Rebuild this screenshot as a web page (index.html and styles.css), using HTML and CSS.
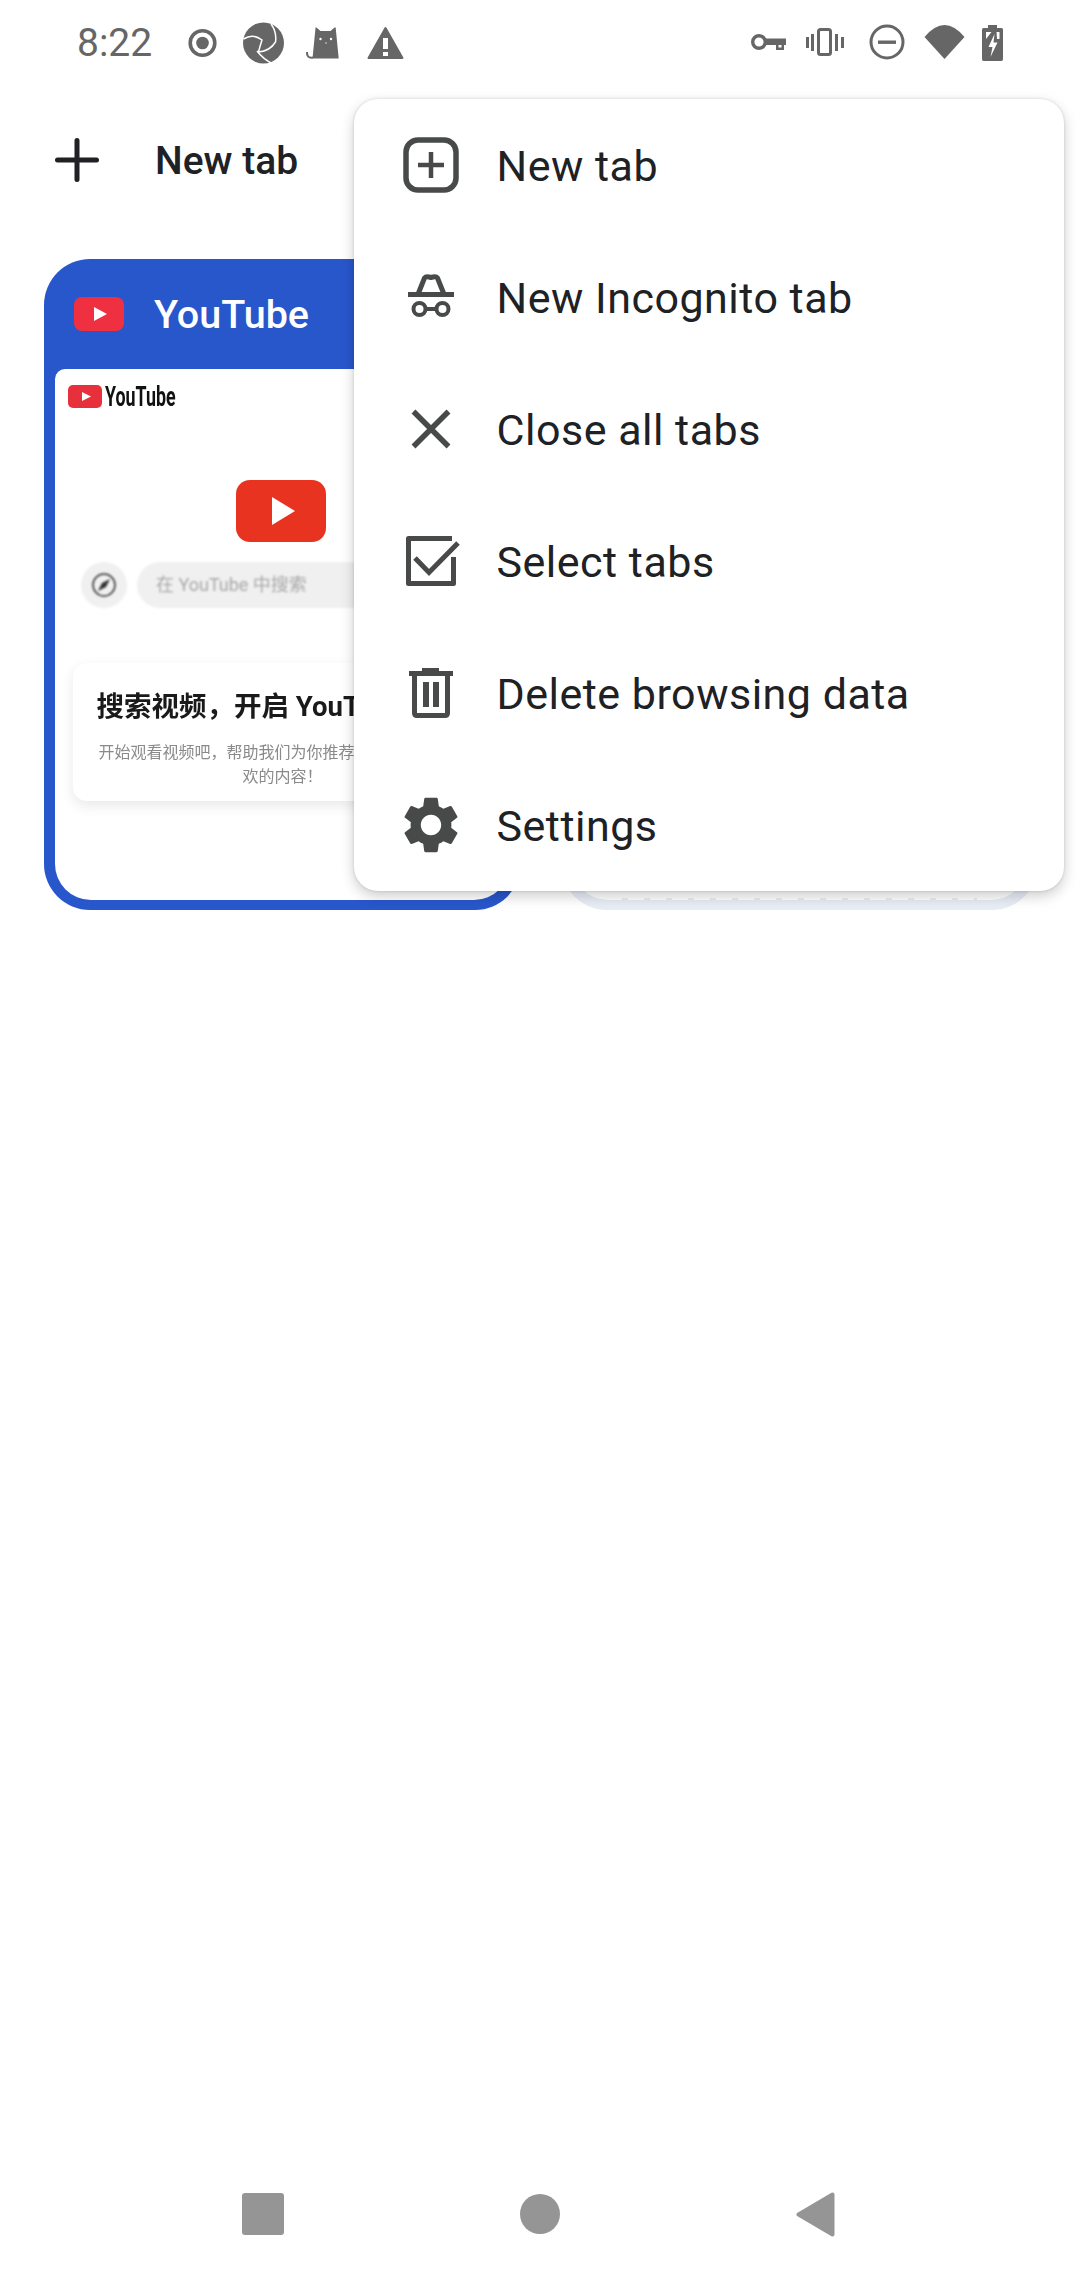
FILE: index.html
```html
<!DOCTYPE html>
<html>
  <head>
    <title>tabs</title>
    <link rel="stylesheet" href="styles.css">
  </head>
  <body>
    <div class="page">
      <div class="status-bar">
        <div class="status-left">
          <span class="time">8:22</span>
          <svg class="slot" viewBox="0 0 61 44"><circle cx="30.5" cy="22" r="12.3" fill="none" stroke="#666" stroke-width="3.6"/><circle cx="30.5" cy="22" r="6.3" fill="#666"/></svg>
          <svg class="slot" viewBox="0 0 61 44"><circle cx="30.5" cy="22" r="20.5" fill="#666"/><path d="M10.5 18Q20 12 29 19Q27 25 25.5 31Q37 30 42.5 21Q44 11 38 3M24 30Q30 38 40 43" fill="none" stroke="#fff" stroke-width="1.5"/></svg>
          <svg class="slot" viewBox="0 0 61 44"><path d="M18.5 37.500L21.500 7Q21.700 5.500 23 7L26.500 10H36.500L40 7Q41.500 5.500 41.700 7L44.700 37.500Z" fill="#666"/><path d="M19 36.500Q12.500 37.500 13 31" fill="none" stroke="#666" stroke-width="2"/><circle cx="26.500" cy="18" r="1.200" fill="#fff"/><circle cx="37" cy="18" r="1.200" fill="#fff"/><circle cx="32" cy="22" r=".8" fill="#ddd"/></svg>
          <svg class="slot" viewBox="0 0 61 44"><path d="M30.500 7L47.500 37H13.500Z" fill="#666" stroke="#666" stroke-width="2" stroke-linejoin="round"/><path d="M28 17h5v11h-5zM28 31h5v4h-5z" fill="#fff"/></svg>
        </div>
        <div class="status-right">
          <svg class="ic-key" viewBox="0 0 36 44"><circle cx="8" cy="21" r="6.300" fill="none" stroke="#666" stroke-width="3.400"/><path d="M14 17.500H35V24H33V29H25V24H14Z" fill="#666"/><path d="M27.500 24h3v2.500h-3z" fill="#fff"/></svg>
          <svg class="ic-vibrate" viewBox="0 0 40 44"><rect x="13.500" y="8.500" width="12" height="25" rx="2" fill="none" stroke="#666" stroke-width="3"/><path d="M1 16h3v11H1zM6 13h3v17H6zM30 13h3v17h-3zM36 16h3v11h-3z" fill="#666"/></svg>
          <svg class="ic-dnd" viewBox="0 0 40 44"><circle cx="20" cy="21" r="16" fill="none" stroke="#666" stroke-width="3"/><path d="M11 19.500h18v3.400H11z" fill="#666"/></svg>
          <svg class="ic-wifi" viewBox="0 0 41 44"><path d="M.5 16Q20.500-8 40.500 16L20.500 38Z" fill="#666"/></svg>
          <svg class="ic-battery" viewBox="0 0 21 44"><path d="M6 4H15V7H19.500Q21 7 21 8.500V38Q21 40 19.500 40H1.500Q0 40 0 38V8.500Q0 7 1.500 7H6Z" fill="#666"/><path d="M4 11H9.500L4 18ZM14.500 11H17.500V18H15ZM12.500 13L6.500 26H10.500L8.500 36L15.500 21.500H11.500Z" fill="#fff"/></svg>
        </div>
      </div>

      <div class="toolbar">
        <svg class="toolbar-plus" viewBox="0 0 44 44"><path d="M22 2.500V41.500M2.500 22H41.500" stroke="#202124" stroke-width="5" stroke-linecap="round"/></svg>
        <span class="toolbar-label">New tab</span>
      </div>

      <div class="tabs">
        <div class="tab tab-active">
          <div class="tab-head">
            <svg class="tab-favicon" viewBox="0 0 50 34"><rect width="50" height="34" rx="8" fill="#ee3040"/><path d="M20 10L33 17L20 24Z" fill="#fff"/></svg>
            <span class="tab-title">YouTube</span>
          </div>
          <div class="thumb">
            <div class="yt-logo">
              <svg class="yt-logo-mark" viewBox="0 0 34 23"><rect width="34" height="23" rx="5" fill="#e8303c"/><path d="M14 7L23 11.500L14 16Z" fill="#fff"/></svg>
              <span class="yt-logo-text">YouTube</span>
            </div>
            <svg class="yt-play" viewBox="0 0 90 62"><rect width="90" height="62" rx="14" fill="#e83320"/><path d="M36 17L59 31L36 45Z" fill="#fff"/></svg>
            <div class="yt-search">
              <div class="yt-compass">
                <svg viewBox="0 0 26 26" width="26" height="26"><circle cx="13" cy="13" r="11" fill="none" stroke="#333" stroke-width="1.500"/><path d="M19 7L15 15L7 19L11 11Z" fill="#333"/></svg>
              </div>
              <div class="yt-pill">在 YouTube 中搜索</div>
            </div>
            <div class="yt-card">
              <div class="yt-card-title">搜索视频，开启 YouTube 之旅</div>
              <div class="yt-card-text">开始观看视频吧，帮助我们为你推荐更多你可能会喜<br>欢的内容！</div>
            </div>
          </div>
        </div>
        <div class="tab tab-idle">
          <div class="tab-head"></div>
          <div class="thumb thumb-idle">
            <div class="thumb-scrap"></div>
          </div>
        </div>
      </div>

      <div class="spacer"></div>

      <div class="nav">
        <div class="nav-square"></div>
        <div class="nav-circle"></div>
        <svg class="nav-back" viewBox="0 0 39 45"><path d="M36.500 2.500V42.500L2.500 22.500Z" fill="#959595" stroke="#959595" stroke-width="4" stroke-linejoin="round"/></svg>
      </div>
    </div>

    <div class="menu">
      <div class="menu-row">
        <svg class="menu-icon" viewBox="0 0 68 68"><rect x="9" y="9" width="50" height="50" rx="12" fill="none" stroke="#484a4a" stroke-width="5.500"/><path d="M21 34H47M34 21V47" stroke="#484a4a" stroke-width="4.500"/></svg>
        <span class="menu-label">New tab</span>
      </div>
      <div class="menu-row">
        <svg class="menu-icon" viewBox="0 0 68 68"><path d="M11 31.500H57" stroke="#484a4a" stroke-width="5"/><path d="M21.500 30L27.500 15Q29 13 34 14.500Q39 13 40.500 15L46.500 30" fill="none" stroke="#484a4a" stroke-width="5"/><circle cx="22.500" cy="46" r="6" fill="none" stroke="#484a4a" stroke-width="4"/><circle cx="45.500" cy="46" r="6" fill="none" stroke="#484a4a" stroke-width="4"/><path d="M28 46H40" stroke="#484a4a" stroke-width="4"/></svg>
        <span class="menu-label">New Incognito tab</span>
      </div>
      <div class="menu-row">
        <svg class="menu-icon" viewBox="0 0 68 68"><path d="M16.500 16.500L51.500 51.500M51.500 16.500L16.500 51.500" stroke="#484a4a" stroke-width="5.500"/></svg>
        <span class="menu-label">Close all tabs</span>
      </div>
      <div class="menu-row">
        <svg class="menu-icon" viewBox="0 0 68 68"><path d="M55 11.500H11.500V56.500H56.500V30" fill="none" stroke="#484a4a" stroke-width="5" stroke-linejoin="round"/><path d="M18 31L32 45.500L61 16" fill="none" stroke="#484a4a" stroke-width="5"/></svg>
        <span class="menu-label">Select tabs</span>
      </div>
      <div class="menu-row">
        <svg class="menu-icon" viewBox="0 0 68 68"><path d="M25 9H42V12H56V17H12V12H25Z" fill="#484a4a"/><path d="M17.500 17V54Q17.500 56.500 20 56.500H48Q50.500 56.500 50.500 54V17" fill="none" stroke="#484a4a" stroke-width="5"/><path d="M26 23h6v25h-6zM36 23h6v25h-6z" fill="#484a4a"/></svg>
        <span class="menu-label">Delete browsing data</span>
      </div>
      <div class="menu-row">
        <svg class="menu-icon" viewBox="0 0 24 24"><path d="M19.140 12.940c.04-.3.06-.61.06-.94 0-.32-.02-.64-.07-.94l2.030-1.580c.18-.14.23-.41.12-.61l-1.920-3.320c-.12-.22-.37-.29-.59-.22l-2.390.96c-.5-.38-1.030-.7-1.620-.94l-.36-2.540c-.04-.24-.24-.41-.48-.41h-3.840c-.24 0-.43.17-.47.41l-.36 2.540c-.59.24-1.130.57-1.620.94l-2.390-.96c-.22-.08-.47 0-.59.22L2.740 8.870c-.12.21-.08.47.12.61l2.030 1.580c-.05.3-.09.63-.09.94s.02.64.07.94l-2.030 1.580c-.18.14-.23.41-.12.61l1.920 3.320c.12.22.37.29.59.22l2.390-.96c.5.38 1.030.7 1.620.94l.36 2.540c.05.24.24.41.48.41h3.840c.24 0 .44-.17.47-.41l.36-2.540c.59-.24 1.130-.56 1.620-.94l2.390.96c.22.08.47 0 .59-.22l1.920-3.320c.12-.22.07-.47-.12-.61l-2.010-1.580zM12 15.600c-1.980 0-3.600-1.620-3.600-3.600s1.620-3.600 3.600-3.600 3.600 1.620 3.600 3.600-1.620 3.600-3.600 3.600z" fill="#484a4a"/></svg>
        <span class="menu-label">Settings</span>
      </div>
    </div>
  </body>
</html>
```

FILE: styles.css
```css
body{
  margin:0;
  background:#fff;
  font-family:Roboto,"Noto Sans CJK SC",sans-serif;
  color:#202124;
  overflow:hidden;
}
.page{
  width:1080px;
  height:2280px;
  display:flex;
  flex-direction:column;
}

/* status bar */
.status-bar{
  height:86px;
  display:flex;
  align-items:center;
  justify-content:space-between;
  padding:0 77px 0 77px;
}
.status-left,.status-right{
  display:flex;
  align-items:center;
}
.time{
  width:94.5px;
  font-size:39px;
  color:#666;
}
.slot{
  width:61px;
  height:44px;
}
.status-right svg{
  height:44px;
}
.ic-key{width:36px;margin-right:18px;}
.ic-vibrate{width:40px;margin-right:22px;}
.ic-dnd{width:40px;margin-right:17px;}
.ic-wifi{width:41px;margin-right:17px;}
.ic-battery{width:21px;}

/* toolbar */
.toolbar{
  height:148px;
  display:flex;
  align-items:center;
  padding-left:55px;
}
.toolbar-plus{
  width:44px;
  height:44px;
}
.toolbar-label{
  margin-left:56px;
  padding-top:2px;
  font-size:39px;
  font-weight:500;
}

/* tab grid */
.tabs{
  display:grid;
  grid-template-columns:1fr 1fr;
  column-gap:40px;
  padding:25px 42px 0 44px;
}
.tab{
  height:651px;
  padding:0 11px 10px;
  border-radius:46px;
  display:flex;
  flex-direction:column;
  box-sizing:border-box;
}
.tab-active{background:#2857cc;}
.tab-idle{background:#e8ecf5;}
.tab-head{
  height:110px;
  flex-shrink:0;
  display:flex;
  align-items:center;
  padding-left:19px;
  box-sizing:border-box;
}
.tab-favicon{
  width:50px;
  height:34px;
}
.tab-title{
  margin-left:30px;
  font-size:39.5px;
  font-weight:500;
  color:#fff;
}
.thumb{
  flex:1;
  background:#fff;
  border-radius:10px 10px 36px 36px;
  overflow:hidden;
  display:flex;
  flex-direction:column;
}
.thumb-idle{
  justify-content:flex-end;
}
.thumb-scrap{
  height:2px;
  margin:0 50px;
  background:repeating-linear-gradient(90deg,#ececec 0 6px,#fff 6px 22px);
}

/* youtube page inside the tab */
.yt-logo{
  display:flex;
  align-items:center;
  margin:16px 0 0 13px;
  height:23px;
  filter:blur(.6px);
}
.yt-logo-mark{
  width:34px;
  height:23px;
}
.yt-logo-text{
  margin-left:3px;
  font-size:27px;
  font-weight:700;
  color:#111;
  transform:scaleX(.66);
  transform-origin:left center;
}
.yt-play{
  width:90px;
  height:62px;
  margin:72px 0 0 181px;
  filter:blur(.5px);
}
.yt-search{
  display:flex;
  gap:10px;
  margin:20px 0 0 26px;
  filter:blur(.8px);
}
.yt-compass{
  width:46px;
  height:46px;
  border-radius:50%;
  background:#f0f0f0;
  display:flex;
  align-items:center;
  justify-content:center;
}
.yt-pill{
  flex:1;
  height:46px;
  line-height:46px;
  padding-left:19px;
  border-radius:23px 0 0 23px;
  background:#f0f0f0;
  color:#a8a8a8;
  font-size:18px;
}
.yt-card{
  margin:55px 18px 0;
  height:138px;
  box-sizing:border-box;
  padding-top:26px;
  border-radius:14px;
  background:#fff;
  box-shadow:0 5px 14px rgba(0,0,0,.09);
  text-align:center;
  white-space:nowrap;
}
.yt-card-title{
  margin-left:-2px;
  font-size:27.5px;
  line-height:36px;
  font-weight:700;
  color:#1a1a1a;
  filter:blur(.7px);
}
.yt-card-text{
  margin-top:16px;
  font-size:16px;
  line-height:24px;
  color:#8a8a8a;
  filter:blur(.7px);
}

.spacer{flex:1;}

/* navigation bar */
.nav{
  height:132px;
  display:flex;
  align-items:center;
  justify-content:center;
  gap:236px;
  padding-right:3px;
  box-sizing:border-box;
}
.nav-square{
  width:42px;
  height:42px;
  border-radius:3px;
  background:#959595;
}
.nav-circle{
  width:40px;
  height:40px;
  border-radius:50%;
  background:#959595;
}
.nav-back{
  width:39px;
  height:45px;
}

/* popup menu */
.menu{
  position:absolute;
  top:99px;
  left:354px;
  width:710px;
  border-radius:24px;
  background:#fff;
  box-shadow:0 5px 14px rgba(0,0,0,.2),0 0 3px rgba(0,0,0,.14);
}
.menu-row{
  height:132px;
  display:flex;
  align-items:center;
  padding-left:43px;
}
.menu-icon{
  width:68px;
  height:68px;
  margin-right:31.5px;
}
.menu-label{
  padding-top:1px;
  font-size:43px;
  letter-spacing:.5px;
}
```
